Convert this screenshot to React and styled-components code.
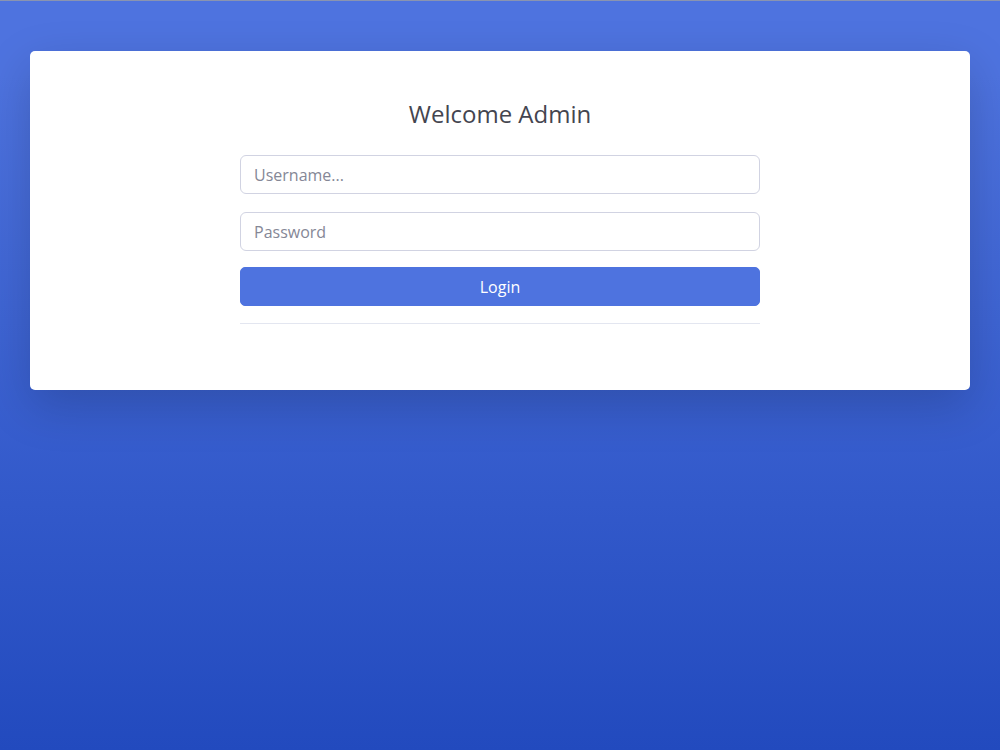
import React from 'react';
import styled, { createGlobalStyle } from 'styled-components';

const GlobalStyle = createGlobalStyle`
  * { box-sizing: border-box; }
  html, body { margin: 0; padding: 0; }
  body {
    font-family: 'Open Sans', 'Liberation Sans', sans-serif;
    font-size: 16px;
    color: #858796;
  }
`;

const Page = styled.div`
  min-height: 100vh;
  background: linear-gradient(180deg, #4e73df 10%, #224abe 100%);
  border-top: 1px solid #8a94b0;
  padding: 50px 30px 0;
`;

const Card = styled.div`
  background: #fff;
  border-radius: 5px;
  box-shadow: 0 16px 48px rgba(0, 0, 0, 0.175);
  padding: 48px 0 50px;
  display: flex;
  justify-content: center;
`;

const Form = styled.form`
  width: 520px;
  display: flex;
  flex-direction: column;
`;

const Title = styled.h4`
  margin: 0 0 27px;
  text-align: center;
  font-size: 24px;
  font-weight: 400;
  line-height: 29px;
  color: #44454f;
`;

const Input = styled.input`
  height: 39px;
  margin-bottom: ${p => p.$gap}px;
  padding: 0 13px;
  border: 1px solid #d1d3e2;
  border-radius: 6px;
  font-family: inherit;
  font-size: 16px;
  color: #6e707e;
  outline: none;

  &::placeholder { color: #858796; }
`;

const Button = styled.button`
  height: 39px;
  border: 1px solid #4e73df;
  border-radius: 5px;
  background: #4e73df;
  color: #fff;
  font-family: inherit;
  font-size: 16px;
  cursor: pointer;
`;

const Divider = styled.hr`
  margin: 17px 0 16px;
  border: 0;
  border-top: 1px solid #e3e6f0;
`;

export default function App() {
  return (
    <>
      <GlobalStyle />
      <Page>
        <Card>
          <Form onSubmit={e => e.preventDefault()}>
            <Title>Welcome Admin</Title>
            <Input type="text" placeholder="Username..." $gap={18} />
            <Input type="password" placeholder="Password" $gap={16} />
            <Button type="submit">Login</Button>
            <Divider />
          </Form>
        </Card>
      </Page>
    </>
  );
}
